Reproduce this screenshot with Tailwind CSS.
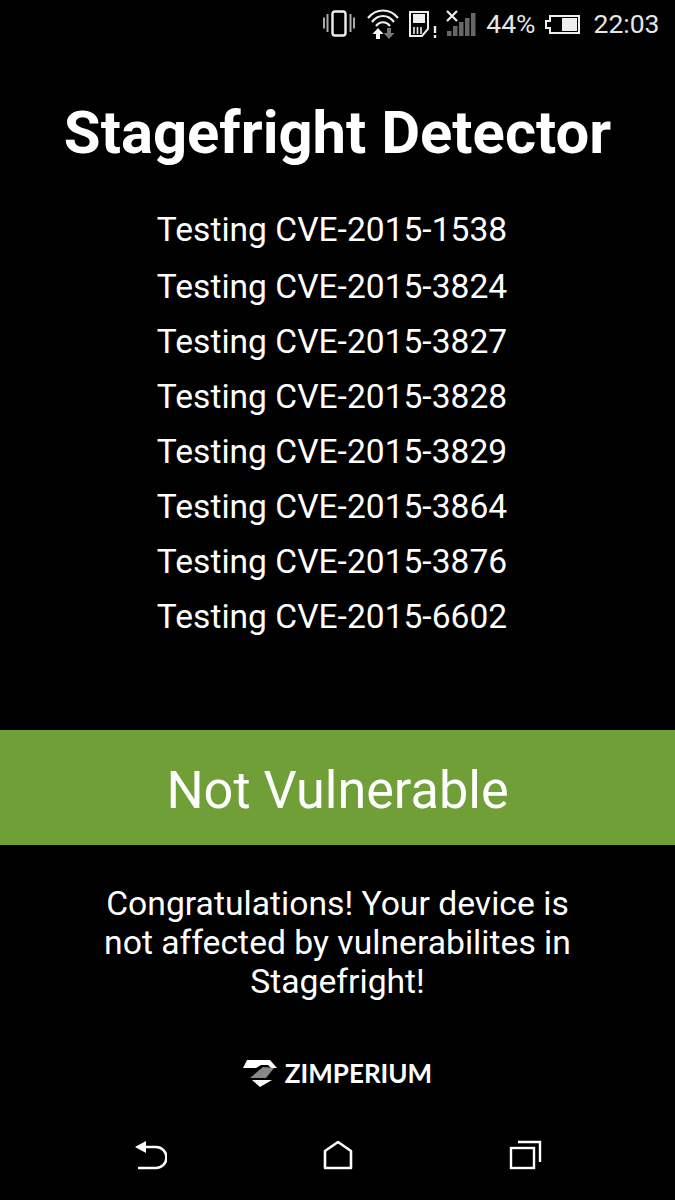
<!DOCTYPE html>
<html lang="en">
<head>
  <meta charset="UTF-8">
  <meta name="viewport" content="width=device-width, initial-scale=1.0">
  <title>Stagefright Detector</title>
  <script src="https://cdn.jsdelivr.net/npm/@tailwindcss/browser@4"></script>
</head>
<body class="bg-black">
  <div class="w-[675px] h-[1200px] bg-black text-white font-['Roboto',sans-serif] flex flex-col overflow-hidden">

    <!-- Status bar -->
    <div class="h-[48px] flex items-center justify-end pr-[15.500px] text-[#e6e6e6] shrink-0">
      <svg class="w-[32px] h-[28px] mr-[12px]" viewBox="0 0 32 28" fill="none">
        <rect x="9.500" y="1.500" width="13" height="24" rx="2.500" stroke="#eee" stroke-width="2.400"/>
        <path d="M4.500 4v18M1 7.500v11M27.500 4v18M31 7.500v11" stroke="#aaa" stroke-width="2"/>
      </svg>
      <svg class="w-[32px] h-[32px] mr-[9px]" viewBox="0 0 32 32" fill="none">
        <path d="M1 10C9 0 23 0 31 10M5 14C11 6 21 6 27 14M9 18C13 13 19 13 23 18" stroke="#eee" stroke-width="2.200"/>
        <path d="M11 20l5.500 6H13v5H9v-5H5.500z" fill="#fff"/>
        <path d="M22 31l5.500-6H24v-5h-4v5h-3.500z" fill="#777"/>
      </svg>
      <svg class="w-[29px] h-[28px] mr-[9px]" viewBox="0 0 29 28" fill="none">
        <path d="M2 2h18v17l-6 7H2z" stroke="#eee" stroke-width="2"/>
        <path d="M5 4h12v9H5z" fill="#eee"/>
        <path d="M6 17v7M9.500 17v7M13 17v7" stroke="#eee" stroke-width="1.600"/>
        <path d="M27 16v7M27 25v3" stroke="#eee" stroke-width="2.400"/>
      </svg>
      <svg class="w-[31px] h-[28px] mr-[9px]" viewBox="0 0 31 28" fill="none">
        <path d="M1 1l10 10M11 1L1 11" stroke="#eee" stroke-width="2.200"/>
        <path d="M1 26v-5h4.500v5zM7 26v-10h4.500v10zM13 26V12h4.500v14zM19 26V8h4.500v18zM25 26V3h4.500v23z" fill="#666"/>
      </svg>
      <span class="text-[26.500px] mr-[8px] leading-none">44%</span>
      <svg class="w-[36px] h-[21px] mr-[14px]" viewBox="0 0 36 21" fill="none">
        <path d="M6 2h29v17H6v-5H2V7h4z" stroke="#eee" stroke-width="2"/>
        <rect x="18" y="4" width="15" height="13" fill="#eee"/>
      </svg>
      <span class="text-[26.500px] leading-none">22:03</span>
    </div>

    <h1 class="mt-[48px] text-[59.800px] leading-[74px] font-bold text-center">Stagefright Detector</h1>

    <div class="mt-[32px] pr-[11px] flex flex-col items-center text-[33.600px] leading-[55px]">
      <p class="mb-[2px]">Testing CVE-2015-1538</p>
      <p>Testing CVE-2015-3824</p>
      <p>Testing CVE-2015-3827</p>
      <p>Testing CVE-2015-3828</p>
      <p>Testing CVE-2015-3829</p>
      <p>Testing CVE-2015-3864</p>
      <p>Testing CVE-2015-3876</p>
      <p>Testing CVE-2015-6602</p>
    </div>

    <div class="mt-[86px] h-[115px] pt-[7px] bg-[#709f37] flex items-center justify-center text-[52.200px] shrink-0">Not Vulnerable</div>

    <p class="mt-[39px] text-[33.700px] leading-[39px] text-center">Congratulations! Your device is<br>not affected by vulnerabilites in<br>Stagefright!</p>

    <!-- Zimperium logo -->
    <div class="mt-[55px] flex items-center justify-center gap-[8px] h-[34px]">
      <svg class="w-[34px] h-[27px]" viewBox="0 0 34 27">
        <path d="M4 0h23l7 8h-6l-3-3h-7l-5 3H0z" fill="#fff"/>
        <path d="M20 7l11 1-8 10H7z" fill="#888"/>
        <path d="M9 20h20l-12 7z" fill="#fff"/>
      </svg>
      <span class="font-['Lato',sans-serif] text-[26px] font-bold leading-none">ZIMPERIUM</span>
    </div>

    <!-- Nav bar -->
    <div class="mt-[50px] flex items-center justify-between pl-[134px] pr-[133px]">
      <svg class="w-[33px] h-[30px]" viewBox="0 0 33 30" fill="none">
        <path d="M1 7l11-6v12z" fill="#fff"/>
        <path d="M9 7h13a9 9 0 0 1 0 21H4" stroke="#fff" stroke-width="2.600"/>
      </svg>
      <svg class="w-[30px] h-[30px]" viewBox="0 0 30 30" fill="none">
        <path d="M2 28V11L15 2l13 9v17z" stroke="#fff" stroke-width="2.600" stroke-linejoin="round"/>
      </svg>
      <svg class="w-[33px] h-[30px]" viewBox="0 0 33 30" fill="none">
        <rect x="2" y="8" width="23" height="20" stroke="#fff" stroke-width="2.400"/>
        <path d="M9 2h22v20" stroke="#fff" stroke-width="2.400"/>
      </svg>
    </div>
  </div>
</body>
</html>
